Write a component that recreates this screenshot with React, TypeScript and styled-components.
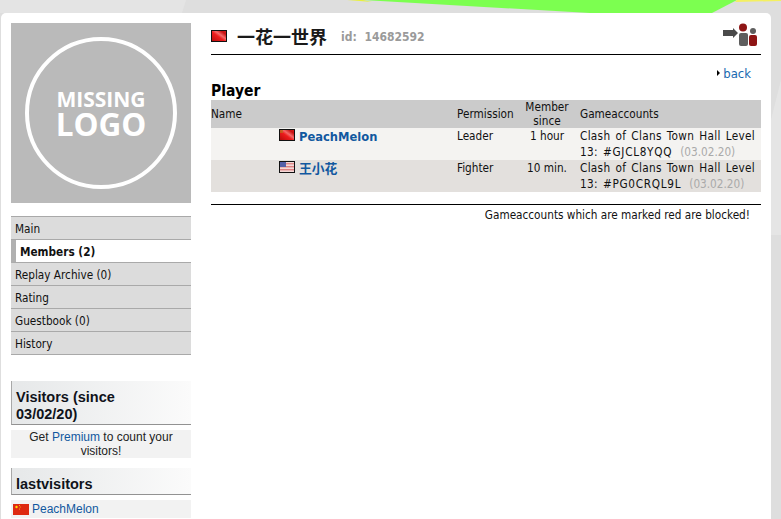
import React from 'react';
import styled, { createGlobalStyle } from 'styled-components';

const Global = createGlobalStyle`
  html, body {
    margin: 0;
    padding: 0;
    background: #e2e2e2;
  }
  body {
    font-family: "DejaVu Sans", sans-serif;
    font-stretch: condensed;
    font-size: 11.7px;
    color: #000;
    overflow: hidden;
  }
  a {
    color: #11589f;
    text-decoration: none;
  }
`;

const Page = styled.div`
  position: relative;
  width: 781px;
  height: 519px;
  overflow: hidden;
  padding-top: 13px;
  box-sizing: border-box;
`;

const Backdrop = styled.svg`
  position: absolute;
  left: 0;
  top: 0;
`;

const Sheet = styled.div`
  position: relative;
  width: 770px;
  height: 520px;
  margin-left: 1px;
  background: #fff;
  border-radius: 5px 5px 0 0;
  display: flex;
  gap: 20px;
  padding: 10px 10px 0;
  box-sizing: border-box;
`;

const Side = styled.aside`
  width: 180px;
  flex: none;
`;

const LogoBox = styled.div`
  width: 180px;
  height: 180px;
  background: #bababa;
  display: flex;
  align-items: center;
  justify-content: center;
`;

const Ring = styled.div`
  width: 152px;
  height: 152px;
  border: 4px solid #fff;
  border-radius: 50%;
  box-sizing: border-box;
  color: #fff;
  font-family: "Open Sans", sans-serif;
  font-stretch: normal;
  font-weight: 700;
  display: flex;
  flex-direction: column;
  align-items: center;
  justify-content: center;
  padding-bottom: 2px;
`;

const LogoTop = styled.span`
  font-size: 21px;
  line-height: 22px;
`;

const LogoBottom = styled.span`
  font-size: 31.5px;
  line-height: 27px;
`;

const Menu = styled.nav`
  margin-top: 13px;
  border-top: 1px solid #a9a9a9;
`;

const MenuItem = styled.div<{ $active?: boolean }>`
  height: 22px;
  line-height: 24px;
  border-bottom: 1px solid #a9a9a9;
  background: ${(p) => (p.$active ? '#fff' : '#dcdcdc')};
  border-left: ${(p) => (p.$active ? '5px solid #b0b0b0' : '0')};
  padding-left: 4px;
  font-weight: ${(p) => (p.$active ? 700 : 400)};
  color: #111;
`;

const BoxTitle = styled.h3<{ $gap: number }>`
  margin: ${(p) => p.$gap}px 0 0;
  padding: 8px 15px 1px 4px;
  font-family: "Liberation Sans", sans-serif;
  font-stretch: normal;
  font-size: 14.5px;
  line-height: 17px;
  font-weight: 700;
  color: #10131a;
  background: linear-gradient(90deg, #e6e8e9, #fbfbfb);
  border-left: 1px solid #a8a8a8;
  border-bottom: 1px solid #929292;
`;

const BoxBody = styled.div`
  margin-top: 5px;
  background: #f2f2f2;
  font-family: "Liberation Sans", sans-serif;
  font-stretch: normal;
  font-size: 12px;
  line-height: 14px;
  text-align: center;
  color: #222;
`;

const VisitorRow = styled.div`
  margin-top: 5px;
  height: 18px;
  background: #f2f2f2;
  font-family: "Liberation Sans", sans-serif;
  font-stretch: normal;
  font-size: 12px;
  display: flex;
  align-items: center;
  gap: 3px;
  padding-left: 2px;
`;

const Main = styled.main`
  width: 550px;
  flex: none;
`;

const Head = styled.header`
  height: 32px;
  box-sizing: border-box;
  padding-bottom: 6px;
  border-bottom: 1px solid #000;
  display: flex;
  align-items: center;
`;

const ClanName = styled.h1`
  margin: 0 0 0 10px;
  font-family: "Noto Sans CJK SC", sans-serif;
  font-stretch: normal;
  font-size: 18px;
  line-height: 26px;
  font-weight: 700;
  color: #1a1a1a;
`;

const ClanId = styled.span`
  margin-left: 14px;
  font-size: 12px;
  font-weight: 700;
  color: #9a9a9a;
  word-spacing: 4px;
  padding-top: 2px;
`;

const HeadIcon = styled.svg`
  margin-left: auto;
  margin-right: 3px;
  margin-top: -2px;
`;

const BackRow = styled.div`
  display: flex;
  justify-content: flex-end;
  align-items: center;
  gap: 3px;
  margin-top: 10px;
  height: 16px;
  padding-right: 10px;
`;

const BackArrow = styled.span`
  width: 0;
  height: 0;
  border-left: 3px solid #000;
  border-top: 3px solid transparent;
  border-bottom: 3px solid transparent;
`;

const BackLink = styled.a`
  font-size: 13px;
  color: #1a69b0;
`;

const Title = styled.h2`
  margin: 2px 0 0;
  font-size: 15.5px;
  line-height: 17px;
  font-weight: 700;
`;

const Table = styled.table`
  width: 550px;
  table-layout: fixed;
  border-collapse: collapse;
`;

const Th = styled.th<{ $w: number; $center?: boolean }>`
  width: ${(p) => p.$w}px;
  height: 28px;
  padding: 1px ${(p) => (p.$center ? '11px' : '0')} 0 0;
  box-sizing: border-box;
  background: #cbcbcb;
  font-weight: 400;
  line-height: 13.5px;
  text-align: ${(p) => (p.$center ? 'center' : 'left')};
  vertical-align: middle;
  color: #111;
`;

const Td = styled.td<{ $center?: boolean; $alt?: boolean }>`
  height: 32px;
  padding: 1px ${(p) => (p.$center ? '11px' : '0')} 0 0;
  box-sizing: border-box;
  background: ${(p) => (p.$alt ? '#e3e0dd' : '#f4f3f1')};
  line-height: 15.5px;
  vertical-align: top;
  text-align: ${(p) => (p.$center ? 'center' : 'left')};
  color: #111;
`;

const Account = styled.span`
  letter-spacing: 0.3px;
  word-spacing: 1.5px;
`;

const Tag = styled.span`
  letter-spacing: 0.7px;
`;

const Player = styled.a`
  font-family: "DejaVu Sans", "Noto Sans CJK SC", sans-serif;
  font-size: 12.8px;
  font-weight: 700;
  color: #11589f;
  margin-left: 4px;
`;

const FlagWrap = styled.span`
  display: inline-block;
  vertical-align: 0;
  line-height: 0;
`;

const Muted = styled.span`
  color: #aaa;
  margin-left: 8px;
  letter-spacing: 0;
`;

const Note = styled.p`
  margin: 12px 0 0;
  padding: 3px 11px 0 0;
  border-top: 1px solid #000;
  text-align: right;
  color: #111;
  line-height: 14px;
`;

const RedFlag = ({ corner }: { corner?: boolean }) => (
  <svg width="16" height="12" viewBox="0 0 16 12">
    <defs>
      <linearGradient id="red" x1="0" y1="1" x2="1" y2="0">
        <stop offset="0" stopColor="#b20a0a" />
        <stop offset="0.45" stopColor="#ee1c1c" />
        <stop offset="0.6" stopColor="#f46a6a" />
        <stop offset="0.8" stopColor="#c81010" />
        <stop offset="1" stopColor="#d52020" />
      </linearGradient>
    </defs>
    <rect x="0.5" y="0.5" width="15" height="11" fill="url(#red)" stroke="#111" />
    {corner && <rect x="1" y="1" width="3" height="3" fill="#b8701a" opacity="0.7" />}
  </svg>
);

const UsFlag = () => (
  <svg width="16" height="12" viewBox="0 0 16 12">
    <rect x="0.5" y="0.5" width="15" height="11" fill="#f3d8d6" stroke="#111" />
    <rect x="1" y="2" width="14" height="1.4" fill="#e08a8a" />
    <rect x="1" y="5" width="14" height="1.4" fill="#dd7f80" />
    <rect x="1" y="8" width="14" height="1.4" fill="#dd7f80" />
    <rect x="1" y="1" width="6" height="5" fill="#5560a8" />
  </svg>
);

const CnFlag = () => (
  <svg width="16" height="11" viewBox="0 0 16 11">
    <rect width="16" height="11" fill="#de2910" />
    <circle cx="3.5" cy="3" r="1.2" fill="#ffde00" />
    <circle cx="6.5" cy="1.5" r="0.5" fill="#ffde00" />
    <circle cx="7.2" cy="3" r="0.5" fill="#ffde00" />
    <circle cx="6.5" cy="5" r="0.5" fill="#ffde00" />
  </svg>
);

const rows = [
  { name: 'PeachMelon', flag: <RedFlag corner />, role: 'Leader', since: '1 hour', tag: '#GJCL8YQQ' },
  { name: '王小花', flag: <UsFlag />, role: 'Fighter', since: '10 min.', tag: '#PG0CRQL9L' },
];

export default function App() {
  return (
    <Page>
      <Global />
      <Backdrop width="781" height="519" viewBox="0 0 781 519">
        <rect width="781" height="519" fill="#dedede" />
        <polygon points="0,0 186,0 182,13 0,13" fill="#e4e4e4" />
        <polygon points="347,0 363,0 372,2" fill="#e8f040" />
        <polygon points="363,0 737,0 712,13 590,13" fill="#7cff50" />
        <polygon points="737,0 781,0 781,1 735,2" fill="#f4f060" />
        <polygon points="771,120 781,80 781,235 771,235" fill="#e5e5e5" />
      </Backdrop>
      <Sheet>
        <Side>
          <LogoBox>
            <Ring>
              <LogoTop>MISSING</LogoTop>
              <LogoBottom>LOGO</LogoBottom>
            </Ring>
          </LogoBox>
          <Menu>
            <MenuItem>Main</MenuItem>
            <MenuItem $active>Members (2)</MenuItem>
            <MenuItem>Replay Archive (0)</MenuItem>
            <MenuItem>Rating</MenuItem>
            <MenuItem>Guestbook (0)</MenuItem>
            <MenuItem>History</MenuItem>
          </Menu>
          <BoxTitle $gap={26}>Visitors (since 03/02/20)</BoxTitle>
          <BoxBody>
            Get <a>Premium</a> to count your visitors!
          </BoxBody>
          <BoxTitle $gap={10}>lastvisitors</BoxTitle>
          <VisitorRow>
            <CnFlag />
            <a>PeachMelon</a>
          </VisitorRow>
        </Side>
        <Main>
          <Head>
            <RedFlag />
            <ClanName>一花一世界</ClanName>
            <ClanId>id: 14682592</ClanId>
            <HeadIcon width="35" height="24" viewBox="0 0 35 24">
              <path d="M0 7h10V5l5 5-5 5v-2H0z" fill="#4a4a4a" />
              <circle cx="20" cy="4.500" r="4" fill="#8e1515" />
              <rect x="16" y="10" width="9" height="13" rx="2" fill="#5e5e5e" />
              <circle cx="30" cy="8" r="3" fill="#5e5e5e" />
              <rect x="26" y="12" width="8" height="11" rx="2" fill="#8e1515" />
            </HeadIcon>
          </Head>
          <BackRow>
            <BackArrow />
            <BackLink>back</BackLink>
          </BackRow>
          <Title>Player</Title>
          <Table>
            <thead>
              <tr>
                <Th $w={68}>Name</Th>
                <Th $w={178} />
                <Th $w={68}>Permission</Th>
                <Th $w={55} $center>
                  Member since
                </Th>
                <Th $w={181}>Gameaccounts</Th>
              </tr>
            </thead>
            <tbody>
              {rows.map((r, i) => (
                <tr key={r.name}>
                  <Td $alt={i === 1} />
                  <Td $alt={i === 1}>
                    <FlagWrap>{r.flag}</FlagWrap>
                    <Player>{r.name}</Player>
                  </Td>
                  <Td $alt={i === 1}>{r.role}</Td>
                  <Td $alt={i === 1} $center>
                    {r.since}
                  </Td>
                  <Td $alt={i === 1}>
                    <Account>
                      Clash of Clans Town Hall Level 13: <Tag>{r.tag}</Tag>
                      <Muted>(03.02.20)</Muted>
                    </Account>
                  </Td>
                </tr>
              ))}
            </tbody>
          </Table>
          <Note>Gameaccounts which are marked red are blocked!</Note>
        </Main>
      </Sheet>
    </Page>
  );
}
